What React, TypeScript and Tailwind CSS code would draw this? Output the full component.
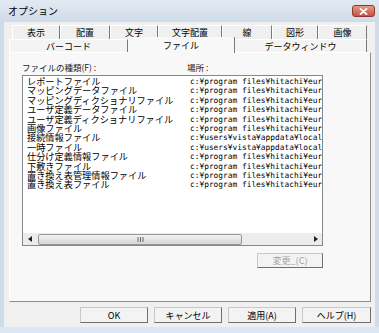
import React from 'react';

const names = [
  'レポートファイル',
  'マッピングデータファイル',
  'マッピングディクショナリファイル',
  'ユーザ定義データファイル',
  'ユーザ定義ディクショナリファイル',
  '画像ファイル',
  '接続情報ファイル',
  '一時ファイル',
  '仕分け定義情報ファイル',
  '下敷きファイル',
  '置き換え表管理情報ファイル',
  '置き換え表ファイル',
];

const pf = 'c:¥program files¥hitachi¥eur¥';
const lu = 'c:¥users¥vista¥appdata¥local¥hitachi';
const paths = [pf, pf, pf, pf, pf, pf, lu, lu, pf, pf, pf, pf];

const row1 = [
  { label: '表示', w: 'w-[48px]' },
  { label: '配置', w: 'w-[50px]' },
  { label: '文字', w: 'w-[48px]' },
  { label: '文字配置', w: 'w-[64px]' },
  { label: '線', w: 'w-[50px]' },
  { label: '図形', w: 'w-[46px]' },
  { label: '画像', w: 'w-[49px]' },
];

function DlgButton({ label, className = '', disabled = false }: { label: string; className?: string; disabled?: boolean }) {
  return (
    <div
      className={`flex items-center justify-center border border-t-[#c8c8c8] border-l-[#c8c8c8] border-r-[#6f6f6f] border-b-[#6f6f6f] bg-[#f3f3f3] ${disabled ? 'text-[#a3a3a3]' : 'text-black'} ${className}`}
    >
      {label}
    </div>
  );
}

export default function App() {
  return (
    <div
      className="w-[379px] h-[333px] flex flex-col bg-[#cfdcea] overflow-hidden"
      style={{ fontFamily: '"Noto Sans CJK JP", "Noto Sans", sans-serif' }}
    >
      {/* Title bar */}
      <div className="h-[22px] flex items-center justify-between pl-[8px] pr-[4px] bg-gradient-to-b from-[#e2e9f2] to-[#cfdbe9]">
        <span className="text-[10px] text-black leading-none">オプション</span>
        <div className="w-[23px] h-[12px] rounded-[3px] border border-[#8d3a2e] bg-gradient-to-b from-[#e5998b] to-[#c9503d] flex items-center justify-center">
          <svg width="9" height="7" viewBox="0 0 9 7">
            <path d="M1.5 0.8 L7.5 6.2 M7.5 0.8 L1.5 6.2" stroke="#ffffff" strokeWidth="1.8" strokeLinecap="round" />
          </svg>
        </div>
      </div>

      {/* Body */}
      <div className="mx-[4px] h-[305px] bg-[#f0f0f0] flex flex-col">
        {/* Tabs */}
        <div className="pt-[3px]">
          <div className="flex ml-[8px] h-[14px] text-[9px] text-black">
            {row1.map((t) => (
              <div
                key={t.label}
                className={`${t.w} flex items-center justify-center border-t border-l border-t-white border-l-white border-r border-r-[#7a7a7a] leading-none`}
              >
                {t.label}
              </div>
            ))}
          </div>
          <div className="flex ml-[5px] h-[13px] text-[9px] text-black">
            <div className="w-[119px] flex items-center justify-center bg-[#f4f4f4] border-t border-l border-t-white border-l-white border-r border-r-[#7a7a7a] leading-none">
              バーコード
            </div>
            <div className="w-[107px] -mt-[2px] h-[16px] flex items-center justify-center bg-[#f8f8f8] border-r border-r-[#7a7a7a] leading-none relative z-10">
              ファイル
            </div>
            <div className="w-[132px] flex items-center justify-center bg-[#f4f4f4] border-t border-t-white border-r border-r-[#7a7a7a] leading-none">
              データウィンドウ
            </div>
          </div>
        </div>

        {/* Panel */}
        <div className="ml-[5px] mr-[4px] h-[250px] bg-[#f8f8f8] border border-t-white border-l-white border-r-[#8e8e8e] border-b-[#8e8e8e] pt-[9px] pl-[12px]">
          <div className="w-[301px] flex flex-col">
            <div className="flex h-[11px] items-center text-[8.5px] text-[#222] leading-none mb-[2px]">
              <span className="w-[165px]">ファイルの種類(F) :</span>
              <span>場所 :</span>
            </div>

            {/* Listbox */}
            <div className="h-[171px] bg-white border border-[#828790] flex flex-col">
              <div className="flex-1 pt-[1px]">
                {names.map((n, i) => (
                  <div key={n} className="flex h-[9.4px] items-center">
                    <div className="w-[167px] pl-[4px] text-[9.2px] leading-[9.4px] text-black whitespace-nowrap">
                      {n}
                    </div>
                    <div
                      className="w-[132px] text-[7.85px] leading-[9.4px] text-black whitespace-nowrap overflow-x-clip"
                      style={{ fontFamily: '"DejaVu Sans Mono", "Liberation Mono", monospace' }}
                    >
                      {paths[i]}
                    </div>
                  </div>
                ))}
              </div>

              {/* Horizontal scrollbar */}
              <div className="h-[12px] flex items-center bg-[#ececec]">
                <div className="w-[14px] h-full flex items-center justify-center">
                  <svg width="4" height="6" viewBox="0 0 4 6">
                    <path d="M4 0 L0 3 L4 6 Z" fill="#222" />
                  </svg>
                </div>
                <div className="w-[204px] h-[11px] ml-[1px] rounded-[2px] border border-[#979797] bg-gradient-to-b from-[#f4f4f4] to-[#d6d6d6] flex items-center justify-center">
                  <svg width="7" height="5" viewBox="0 0 7 5">
                    <path d="M1 0 V5 M3.5 0 V5 M6 0 V5" stroke="#555" strokeWidth="0.9" />
                  </svg>
                </div>
                <div className="flex-1" />
                <div className="w-[12px] h-full flex items-center justify-center">
                  <svg width="4" height="6" viewBox="0 0 4 6">
                    <path d="M0 0 L4 3 L0 6 Z" fill="#222" />
                  </svg>
                </div>
              </div>
            </div>

            <div className="flex justify-end mt-[7px]">
              <DlgButton label="変更_(C)" disabled className="w-[66px] h-[15px] text-[9px] leading-none" />
            </div>
          </div>
        </div>

        {/* Dialog buttons */}
        <div className="flex justify-end gap-[6px] pr-[4px] mt-[5px] text-[9px] leading-none">
          <DlgButton label="OK" className="w-[68px] h-[16px]" />
          <DlgButton label="キャンセル" className="w-[68px] h-[16px]" />
          <DlgButton label="適用(A)" className="w-[68px] h-[16px]" />
          <DlgButton label="ヘルプ(H)" className="w-[69px] h-[16px]" />
        </div>
      </div>

      <div className="flex-1 bg-[#dbe7f4]" />
    </div>
  );
}
